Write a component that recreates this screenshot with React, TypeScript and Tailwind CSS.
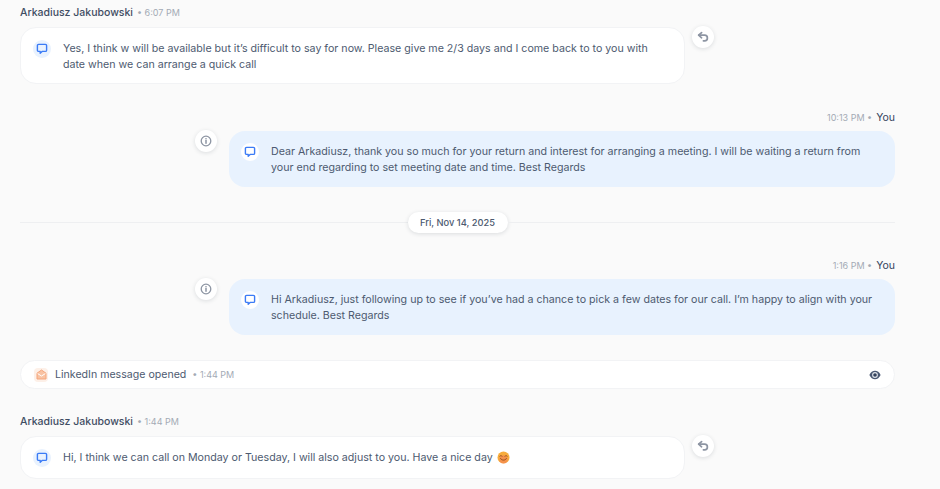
import type { ReactNode } from 'react'

function ChatIcon({ light }: { light?: boolean }) {
  return (
    <div className={`flex h-[18px] w-[18px] shrink-0 items-center justify-center rounded-full ${light ? 'bg-white' : 'bg-[#e9f2fe]'}`}>
      <svg width="12" height="12" viewBox="0 0 12 12" fill="none">
        <path d="M2.6 1.4h6.8c.7 0 1.2.5 1.2 1.2v4.6c0 .7-.5 1.2-1.2 1.2H6.1L4.2 10.2V8.4H2.6c-.7 0-1.2-.5-1.2-1.2V2.6c0-.7.5-1.2 1.2-1.2z" stroke="#3b7bf6" strokeWidth="1.4" strokeLinejoin="round" />
      </svg>
    </div>
  )
}

function SideButton({ children }: { children: ReactNode }) {
  return (
    <div className="-mt-px flex h-[22px] w-[22px] shrink-0 items-center justify-center rounded-full bg-white shadow-[0_1px_4px_rgba(30,41,59,0.14)]">
      {children}
    </div>
  )
}

function ReplyIcon() {
  return (
    <svg width="12" height="12" viewBox="0 0 12 12" fill="none" stroke="#8d95a3" strokeWidth="1.7" strokeLinecap="round" strokeLinejoin="round">
      <path d="M4.6 1.6 1.6 4.2l3 2.6" />
      <path d="M1.8 4.2h5.8c1.6 0 2.8 1.1 2.8 2.7s-1.2 2.9-2.8 2.9H6.4" />
    </svg>
  )
}

function InfoIcon() {
  return (
    <svg width="12" height="12" viewBox="0 0 12 12" fill="none" stroke="#8d95a3" strokeWidth="1.3" strokeLinecap="round">
      <circle cx="6" cy="6" r="4.8" />
      <path d="M6 5.6v2.6" strokeWidth="1.5" />
      <path d="M6 3.7v.1" strokeWidth="1.6" />
    </svg>
  )
}

function Incoming({ time, children, tall }: { time: string; children: ReactNode; tall?: boolean }) {
  return (
    <div>
      <div className="flex h-[14px] items-center">
        <span className="text-[10.5px] font-medium text-[#3f4d63]">Arkadiusz Jakubowski</span>
        <span className="ml-1 text-[9px] text-[#a3aab5]">• {time}</span>
      </div>
      <div className="mt-[7px] flex items-start gap-[7px]">
        <div className={`flex w-[665px] gap-[12px] rounded-[16px] border border-[#f2f3f5] bg-white pl-[12px] pr-[30px] ${tall ? 'h-[57px] pt-[12px]' : 'h-[43px] items-center'}`}>
          <ChatIcon />
          <p className={`text-[10.65px] leading-[16px] text-[#4d5a70] ${tall ? 'pt-px' : ''}`}>{children}</p>
        </div>
        <SideButton><ReplyIcon /></SideButton>
      </div>
    </div>
  )
}

function Outgoing({ time, children }: { time: string; children: ReactNode }) {
  return (
    <div>
      <div className="flex h-[14px] items-center justify-end pt-px">
        <span className="text-[9px] text-[#a3aab5]">{time} •</span>
        <span className="ml-1 text-[10.5px] font-normal text-[#33415a]">You</span>
      </div>
      <div className="mt-[7px] flex items-start justify-end gap-[12px]">
        <SideButton><InfoIcon /></SideButton>
        <div className="flex h-[56px] w-[666px] gap-[12px] rounded-[16px] bg-[#e8f2fe] pl-[12px] pr-[20px] pt-[12px]">
          <ChatIcon light />
          <p className="pt-px text-[10.65px] leading-[16px] text-[#4d5a70]">{children}</p>
        </div>
      </div>
    </div>
  )
}

export default function App() {
  return (
    <div className="h-[489px] overflow-hidden bg-[#fafafa] pl-[20px] pr-[45px] pt-[6px] font-['Inter',sans-serif]">
      <Incoming time="6:07 PM" tall>
        Yes, I think w will be available but it’s difficult to say for now. Please give me 2/3 days and I come back to to you with date when we can arrange a quick call
      </Incoming>
      <div className="mt-[26px]">
        <Outgoing time="10:13 PM">
          Dear Arkadiusz, thank you so much for your return and interest for arranging a meeting. I will be waiting a return from your end regarding to set meeting date and time. Best Regards
        </Outgoing>
      </div>
      <div className="mt-[25px] flex h-[21px] items-center">
        <div className="h-px flex-1 bg-[#eeeff1]" />
        <div className="flex h-[21px] w-[100px] items-center justify-center rounded-full bg-white text-[9.3px] font-medium text-[#4d5a70] shadow-[0_1px_4px_rgba(30,41,59,0.14)]">
          Fri, Nov 14, 2025
        </div>
        <div className="h-px flex-1 bg-[#eeeff1]" />
      </div>
      <div className="mt-[25px]">
        <Outgoing time="1:16 PM">
          Hi Arkadiusz, just following up to see if you’ve had a chance to pick a few dates for our call. I’m happy to align with your schedule. Best Regards
        </Outgoing>
      </div>
      <div className="mt-[25px] flex h-[29px] items-center rounded-full border border-[#f2f3f5] bg-white pl-[13px] pr-[12px]">
        <div className="flex h-[14px] w-[14px] items-center justify-center rounded-[4px] bg-[#fdf0e8]">
          <svg width="11" height="11" viewBox="0 0 11 11" fill="none">
            <path d="M1 4.2 5.5 1 10 4.2V10H1z" fill="#f9c3a3" />
            <path d="M1 4.2 5.5 7 10 4.2" stroke="#fff" strokeWidth="1" />
            <path d="M1 4.2 5.5 1 10 4.2V10H1z" stroke="#f5a67c" strokeWidth="1" strokeLinejoin="round" />
          </svg>
        </div>
        <span className="ml-[7px] text-[10.6px] text-[#4d5a70]">LinkedIn message opened</span>
        <span className="ml-[6px] text-[9px] text-[#a3aab5]">• 1:44 PM</span>
        <svg width="12" height="10" viewBox="0 0 12 10" className="ml-auto mr-px">
          <path d="M0.4 5C1.7 2.2 3.7.8 6 .8s4.3 1.4 5.6 4.2C10.3 7.8 8.3 9.2 6 9.2S1.7 7.8.4 5z" fill="#4a5872" />
          <circle cx="6" cy="5" r="2.9" fill="#dfe3ea" />
          <circle cx="6" cy="5" r="1.8" fill="#33415a" />
        </svg>
      </div>
      <div className="mt-[26px]">
        <Incoming time="1:44 PM">
          Hi, I think we can call on Monday or Tuesday, I will also adjust to you. Have a nice day{' '}
          <svg width="13" height="13" viewBox="0 0 13 13" className="ml-[1px] inline-block align-[-3px]">
            <circle cx="6.5" cy="6.5" r="6" fill="#f7ac3c" />
            <circle cx="6.5" cy="8.4" r="4.1" fill="#f3785a" opacity="0.5" />
            <path d="M2.9 5.2c.5-.9 1.6-.9 2.1 0M8 5.2c.5-.9 1.6-.9 2.1 0" stroke="#8a4a1c" strokeWidth="0.9" fill="none" strokeLinecap="round" />
            <path d="M3.6 7.6c.8 2.1 5 2.1 5.8 0" stroke="#8a4a1c" strokeWidth="0.9" fill="none" strokeLinecap="round" />
          </svg>
        </Incoming>
      </div>
    </div>
  )
}
